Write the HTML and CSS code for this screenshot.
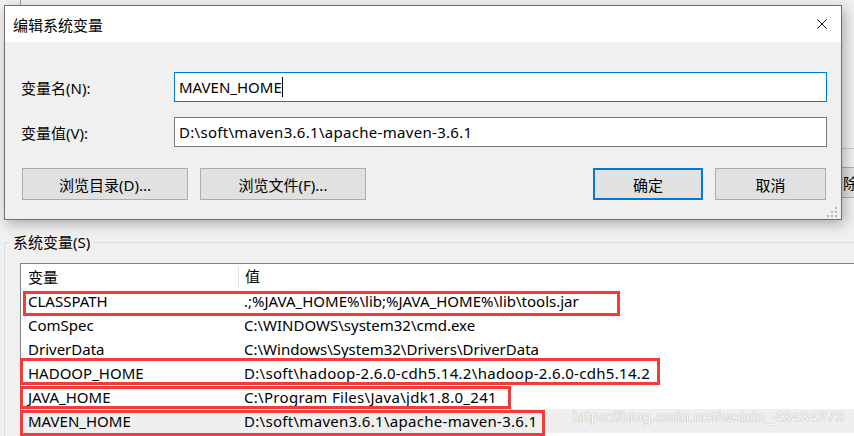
FILE: index.html
```html
<!DOCTYPE html>
<html lang="zh-CN">
<head>
  <meta charset="UTF-8" />
  <title>编辑系统变量</title>
  <link rel="stylesheet" href="styles.css">
</head>
<body>
  <div class="desktop">
    <div class="back-window">
      <div class="back-strip"><div class="back-edge"></div></div>
      <div class="group">
        <div class="group-title">系统变量(S)</div>
        <div class="list">
          <div class="list-head">
            <span class="col-name">变量</span>
            <span class="col-value">值</span>
          </div>
          <div class="row"><span class="col-name">CLASSPATH</span><span class="col-value">.;%JAVA_HOME%\lib;%JAVA_HOME%\lib\tools.jar</span></div>
          <div class="row"><span class="col-name">ComSpec</span><span class="col-value">C:\WINDOWS\system32\cmd.exe</span></div>
          <div class="row"><span class="col-name">DriverData</span><span class="col-value">C:\Windows\System32\Drivers\DriverData</span></div>
          <div class="row"><span class="col-name">HADOOP_HOME</span><span class="col-value wide">D:\soft\hadoop-2.6.0-cdh5.14.2\hadoop-2.6.0-cdh5.14.2</span></div>
          <div class="row"><span class="col-name">JAVA_HOME</span><span class="col-value wide">C:\Program Files\Java\jdk1.8.0_241</span></div>
          <div class="row selected"><span class="col-name">MAVEN_HOME</span><span class="col-value wide">D:\soft\maven3.6.1\apache-maven-3.6.1</span></div>
        </div>
      </div>
      <div class="back-line"></div>
      <button class="back-btn">删除</button>
    </div>

    <div class="mark mark-classpath"></div>
    <div class="mark mark-hadoop"></div>
    <div class="mark mark-java"></div>
    <div class="mark mark-maven"></div>
    <div class="watermark">https://blog.csdn.net/weixin_43434273</div>

    <div class="dialog">
      <div class="title-bar">
        <span class="title">编辑系统变量</span>
        <svg class="close" width="10" height="10" viewBox="0 0 10 10">
          <path d="M0.5 0.5 L9.5 9.5 M9.5 0.5 L0.5 9.5" stroke="#111" stroke-width="1" fill="none"/>
        </svg>
      </div>
      <div class="dialog-body">
        <div class="field">
          <label class="field-label">变量名(N):</label>
          <div class="input focused">MAVEN_HOME<span class="caret"></span></div>
        </div>
        <div class="field field-second">
          <label class="field-label">变量值(V):</label>
          <div class="input wide">D:\soft\maven3.6.1\apache-maven-3.6.1</div>
        </div>
        <div class="buttons">
          <button class="btn btn-wide">浏览目录(D)...</button>
          <button class="btn btn-wide">浏览文件(F)...</button>
          <div class="spacer"></div>
          <button class="btn btn-ok">确定</button>
          <button class="btn btn-cancel">取消</button>
        </div>
      </div>
      <svg class="grip" width="11" height="11" viewBox="0 0 11 11">
        <rect x="8" y="0" width="2" height="2" fill="#b8b8b8"/>
        <rect x="8" y="4" width="2" height="2" fill="#b8b8b8"/>
        <rect x="4" y="4" width="2" height="2" fill="#b8b8b8"/>
        <rect x="8" y="8" width="2" height="2" fill="#b8b8b8"/>
        <rect x="4" y="8" width="2" height="2" fill="#b8b8b8"/>
        <rect x="0" y="8" width="2" height="2" fill="#b8b8b8"/>
      </svg>
    </div>
  </div>
</body>
</html>
```

FILE: styles.css
```css
body {
  margin: 0;
  background: #f0f0f0;
  font-family: "Noto Sans", "Noto Sans CJK SC", sans-serif;
  font-size: 15px;
  color: #000;
  overflow: hidden;
}
.desktop {
  position: relative;
  width: 854px;
  height: 436px;
  overflow: hidden;
}
.back-window {
  height: 436px;
  background: #f0f0f0;
}
.back-strip {
  height: 242px;
}
.back-edge {
  height: 6px;
  margin-left: 20px;
  border-left: 1px solid #a0a0a0;
}
.group {
  margin-left: 4px;
  border-top: 1px solid #dcdcdc;
  border-left: 1px solid #dcdcdc;
}
.group-title {
  display: table;
  margin: -11px 0 0 5px;
  padding: 0 3px;
  height: 20px;
  line-height: 20px;
  background: #f0f0f0;
}
.list {
  margin: 11px 0 0 15px;
  border-top: 1px solid #828282;
  border-left: 1px solid #828282;
  background: #fff;
  height: 200px;
}
.list-head, .row {
  display: flex;
  white-space: nowrap;
}
.list-head {
  height: 25px;
  line-height: 25px;
}
.row {
  height: 24px;
  line-height: 24px;
}
.row.selected {
  background: #efefef;
}
.col-name {
  width: 210px;
  padding-left: 7px;
  flex: none;
}
.col-value {
  padding-left: 6px;
}
.wide {
  letter-spacing: 0.3px;
}
.list-head .col-name {
  border-right: 1px solid #e5e5e5;
  height: 22px;
  margin-top: 2px;
  line-height: 22px;
}
.back-line {
  position: absolute;
  left: 842px;
  top: 148px;
  width: 20px;
  border-top: 1px solid #c8c8c8;
}
.back-btn {
  position: absolute;
  left: 788px;
  top: 167px;
  width: 110px;
  height: 31px;
  border: 1px solid #adadad;
  background: #e1e1e1;
  font: inherit;
  padding: 0;
}
.mark {
  position: absolute;
  border: 3px solid #f43b3b;
  box-sizing: border-box;
}
.mark-classpath { left: 23px; top: 291px; width: 597px; height: 25px; }
.mark-hadoop { left: 20px; top: 358px; width: 640px; height: 27px; }
.mark-java { left: 20px; top: 386px; width: 491px; height: 23px; }
.mark-maven { left: 20px; top: 410px; width: 525px; height: 26px; }
.watermark {
  position: absolute;
  left: 573px;
  top: 408px;
  font-family: "Liberation Sans", sans-serif;
  font-size: 15.5px;
  letter-spacing: 0.2px;
  color: #fafafa;
  text-shadow: 0 0 1px #aaa, 0 0 1px #bbb;
  white-space: nowrap;
}
.dialog {
  position: absolute;
  left: 4px;
  top: 5px;
  width: 838px;
  height: 215px;
  box-sizing: border-box;
  border: 1px solid #6f6f6f;
  background: #f0f0f0;
  box-shadow: 3px 4px 12px rgba(0, 0, 0, 0.28);
}
.title-bar {
  height: 36px;
  background: #fff;
  display: flex;
  align-items: center;
  padding: 0 14px 0 8px;
}
.title {
  flex: 1;
}
.close {
  display: block;
}
.dialog-body {
  padding: 30px 14px 0 16px;
}
.field {
  display: flex;
  align-items: center;
  height: 30px;
}
.field-second {
  margin-top: 15px;
}
.field-label {
  width: 153px;
  flex: none;
}
.input {
  flex: 1;
  height: 30px;
  box-sizing: border-box;
  border: 1px solid #7a7a7a;
  background: #fff;
  padding-left: 4px;
  line-height: 28px;
  white-space: nowrap;
}
.input.focused {
  border-color: #0078d7;
}
.caret {
  display: inline-block;
  width: 1px;
  height: 20px;
  background: #000;
  vertical-align: -4px;
}
.buttons {
  display: flex;
  gap: 12px;
  margin-top: 21px;
  padding-left: 1px;
  padding-right: 1px;
}
.spacer {
  flex: 1;
}
.btn {
  height: 32px;
  border: 1px solid #adadad;
  background: #e1e1e1;
  font: inherit;
  color: #000;
  padding: 0;
}
.btn-wide {
  width: 166px;
}
.btn-ok {
  width: 110px;
  border: 2px solid #0078d7;
}
.btn-cancel {
  width: 111px;
}
.grip {
  position: absolute;
  right: 3px;
  bottom: 1px;
}
```
